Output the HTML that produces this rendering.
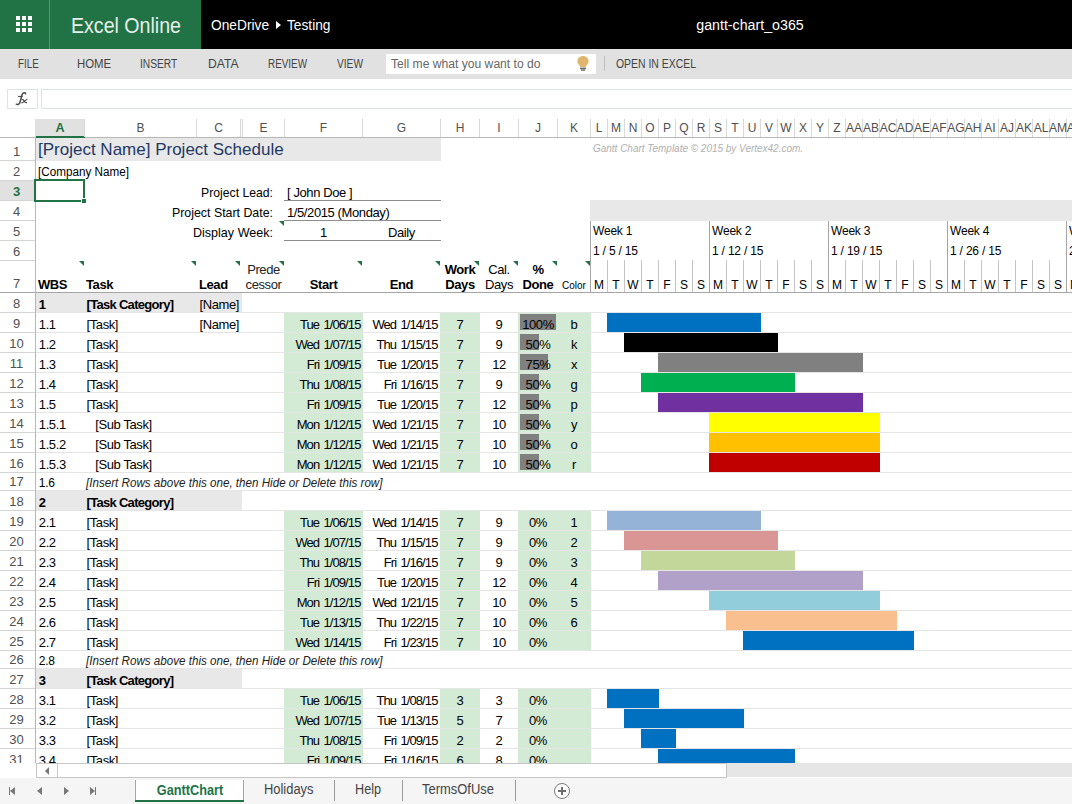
<!DOCTYPE html><html><head><meta charset="utf-8"><style>
html,body{margin:0;padding:0;}
body{width:1072px;height:804px;overflow:hidden;position:relative;background:#fff;font-family:"Liberation Sans", sans-serif;}
div{box-sizing:border-box;}
</style></head><body>
<div style="position:absolute;left:0px;top:0px;width:1072px;height:49px;background:#000;"></div>
<div style="position:absolute;left:0px;top:0px;width:201px;height:49px;background:#217346;"></div>
<div style="position:absolute;left:49px;top:0px;width:1px;height:49px;background:#5e8f72;"></div>
<div style="position:absolute;left:16px;top:16px;width:4px;height:4px;background:#fff;"></div>
<div style="position:absolute;left:16px;top:22px;width:4px;height:4px;background:#fff;"></div>
<div style="position:absolute;left:16px;top:28px;width:4px;height:4px;background:#fff;"></div>
<div style="position:absolute;left:22px;top:16px;width:4px;height:4px;background:#fff;"></div>
<div style="position:absolute;left:22px;top:22px;width:4px;height:4px;background:#fff;"></div>
<div style="position:absolute;left:22px;top:28px;width:4px;height:4px;background:#fff;"></div>
<div style="position:absolute;left:28px;top:16px;width:4px;height:4px;background:#fff;"></div>
<div style="position:absolute;left:28px;top:22px;width:4px;height:4px;background:#fff;"></div>
<div style="position:absolute;left:28px;top:28px;width:4px;height:4px;background:#fff;"></div>
<div style="position:absolute;top:15.38px;font-size:22px;line-height:22px;white-space:nowrap;color:#e6efe9;transform:scaleX(0.8907);transform-origin:left 0;left:70.5px;">Excel Online</div>
<div style="position:absolute;top:18.15px;font-size:14px;line-height:14px;white-space:nowrap;color:#fff;transform:scaleX(0.9814);transform-origin:left 0;left:210.8px;">OneDrive</div>
<div style="position:absolute;left:276px;top:21px;width:0;height:0;border-top:4px solid transparent;border-bottom:4px solid transparent;border-left:5px solid #fff;"></div>
<div style="position:absolute;top:18.15px;font-size:14px;line-height:14px;white-space:nowrap;color:#fff;transform:scaleX(0.9797);transform-origin:left 0;left:286.6px;">Testing</div>
<div style="position:absolute;top:18.15px;font-size:14px;line-height:14px;white-space:nowrap;color:#fff;transform:scaleX(1.0151);transform-origin:center 0;left:549.75px;width:400px;text-align:center;">gantt-chart_o365</div>
<div style="position:absolute;left:0px;top:49px;width:1072px;height:30px;background:#e1e1e1;"></div>
<div style="position:absolute;top:57.84px;font-size:12px;line-height:12px;white-space:nowrap;color:#444;transform:scaleX(0.8182);transform-origin:left 0;left:18.4px;">FILE</div>
<div style="position:absolute;top:57.84px;font-size:12px;line-height:12px;white-space:nowrap;color:#444;transform:scaleX(0.9472);transform-origin:left 0;left:76.7px;">HOME</div>
<div style="position:absolute;top:57.84px;font-size:12px;line-height:12px;white-space:nowrap;color:#444;transform:scaleX(0.8516);transform-origin:left 0;left:139.79999999999998px;">INSERT</div>
<div style="position:absolute;top:57.84px;font-size:12px;line-height:12px;white-space:nowrap;color:#444;transform:scaleX(1.0132);transform-origin:left 0;left:207.6px;">DATA</div>
<div style="position:absolute;top:57.84px;font-size:12px;line-height:12px;white-space:nowrap;color:#444;transform:scaleX(0.8245);transform-origin:left 0;left:267.7px;">REVIEW</div>
<div style="position:absolute;top:57.84px;font-size:12px;line-height:12px;white-space:nowrap;color:#444;transform:scaleX(0.8469);transform-origin:left 0;left:336.59999999999997px;">VIEW</div>
<div style="position:absolute;left:386px;top:54px;width:210px;height:20px;background:#fff;"></div>
<div style="position:absolute;top:58.42px;font-size:12.5px;line-height:12.5px;white-space:nowrap;color:#666;transform:scaleX(0.9695);transform-origin:left 0;left:391px;">Tell me what you want to do</div>
<div style="position:absolute;left:604px;top:56px;width:1px;height:15px;background:#c0c0c0;"></div>
<div style="position:absolute;top:57.84px;font-size:12px;line-height:12px;white-space:nowrap;color:#444;transform:scaleX(0.8696);transform-origin:left 0;left:616px;">OPEN IN EXCEL</div>
<svg style="position:absolute;left:570px;top:50px" width="26" height="26" viewBox="570 50 26 26">
<path d="M583 56 C586.3 56 588.6 58.4 588.6 61.3 C588.6 63.4 587.2 64.4 586.4 65.6 C586.1 66.1 586 66.6 586 67 L580 67 C580 66.6 579.9 66.1 579.6 65.6 C578.8 64.4 577.4 63.4 577.4 61.3 C577.4 58.4 579.7 56 583 56 Z" fill="#e0b56e"/>
<rect x="580" y="67.6" width="6" height="1.6" fill="#6a6a6a"/>
<rect x="581" y="69.4" width="4" height="1.4" fill="#6a6a6a"/>
</svg>
<div style="position:absolute;left:7px;top:89px;width:31px;height:20px;border:1px solid #dfe2e5;background:#fff;"></div>
<svg style="position:absolute;left:7px;top:89px" width="31" height="20" viewBox="0 0 31 20">
<path d="M18.6 4.6 C18.2 3.6 16.3 3.4 15.3 5.2 C14.6 6.6 13.5 12.5 12.6 14.2 C11.9 15.6 10.4 15.9 9.3 15.2" fill="none" stroke="#4a4a4a" stroke-width="1.5" stroke-linecap="round"/>
<path d="M11.2 7.5 L15.6 7.5" stroke="#4a4a4a" stroke-width="1.2"/>
<path d="M14.6 10.4 C15.8 10.2 16.5 10.8 17.2 12.2 C17.8 13.4 18.6 13.8 20 13.6 M20.4 10.3 C19.4 10.6 17.2 12.4 15.8 13.5 C15.3 13.8 14.8 13.8 14.3 13.6" fill="none" stroke="#4a4a4a" stroke-width="1.2"/>
</svg>
<div style="position:absolute;left:41px;top:89px;width:1040px;height:20px;border:1px solid #dfe2e5;background:#fff;"></div>
<div style="position:absolute;left:35px;top:119px;width:49px;height:18px;background:#e1e1e1;"></div>
<div style="position:absolute;left:0px;top:137px;width:1072px;height:1px;background:#b7b7b7;"></div>
<div style="position:absolute;left:36px;top:136px;width:49px;height:2px;background:#217346;"></div>
<div style="position:absolute;left:84px;top:119px;width:1px;height:18px;background:#d9d9d9;"></div>
<div style="position:absolute;top:121.62px;font-size:12.5px;line-height:12.5px;white-space:nowrap;color:#217346;font-weight:bold;left:-140.0px;width:400px;text-align:center;">A</div>
<div style="position:absolute;left:196px;top:119px;width:1px;height:18px;background:#d9d9d9;"></div>
<div style="position:absolute;top:122.04px;font-size:12px;line-height:12px;white-space:nowrap;color:#505050;left:-59.5px;width:400px;text-align:center;">B</div>
<div style="position:absolute;left:240px;top:119px;width:1px;height:18px;background:#d9d9d9;"></div>
<div style="position:absolute;top:122.04px;font-size:12px;line-height:12px;white-space:nowrap;color:#505050;left:18.5px;width:400px;text-align:center;">C</div>
<div style="position:absolute;left:242px;top:119px;width:1px;height:18px;background:#d9d9d9;"></div>
<div style="position:absolute;left:284px;top:119px;width:1px;height:18px;background:#d9d9d9;"></div>
<div style="position:absolute;top:122.04px;font-size:12px;line-height:12px;white-space:nowrap;color:#505050;left:63.5px;width:400px;text-align:center;">E</div>
<div style="position:absolute;left:362px;top:119px;width:1px;height:18px;background:#d9d9d9;"></div>
<div style="position:absolute;top:122.04px;font-size:12px;line-height:12px;white-space:nowrap;color:#505050;left:123.5px;width:400px;text-align:center;">F</div>
<div style="position:absolute;left:440px;top:119px;width:1px;height:18px;background:#d9d9d9;"></div>
<div style="position:absolute;top:122.04px;font-size:12px;line-height:12px;white-space:nowrap;color:#505050;left:201.5px;width:400px;text-align:center;">G</div>
<div style="position:absolute;left:479px;top:119px;width:1px;height:18px;background:#d9d9d9;"></div>
<div style="position:absolute;top:122.04px;font-size:12px;line-height:12px;white-space:nowrap;color:#505050;left:260.0px;width:400px;text-align:center;">H</div>
<div style="position:absolute;left:518px;top:119px;width:1px;height:18px;background:#d9d9d9;"></div>
<div style="position:absolute;top:122.04px;font-size:12px;line-height:12px;white-space:nowrap;color:#505050;left:299.0px;width:400px;text-align:center;">I</div>
<div style="position:absolute;left:557px;top:119px;width:1px;height:18px;background:#d9d9d9;"></div>
<div style="position:absolute;top:122.04px;font-size:12px;line-height:12px;white-space:nowrap;color:#505050;left:338.0px;width:400px;text-align:center;">J</div>
<div style="position:absolute;left:590px;top:119px;width:1px;height:18px;background:#d9d9d9;"></div>
<div style="position:absolute;top:122.04px;font-size:12px;line-height:12px;white-space:nowrap;color:#505050;left:374.0px;width:400px;text-align:center;">K</div>
<div style="position:absolute;left:607px;top:119px;width:1px;height:18px;background:#d9d9d9;"></div>
<div style="position:absolute;top:122.04px;font-size:12px;line-height:12px;white-space:nowrap;color:#505050;left:399.0px;width:400px;text-align:center;">L</div>
<div style="position:absolute;left:624px;top:119px;width:1px;height:18px;background:#d9d9d9;"></div>
<div style="position:absolute;top:122.04px;font-size:12px;line-height:12px;white-space:nowrap;color:#505050;left:416.0px;width:400px;text-align:center;">M</div>
<div style="position:absolute;left:641px;top:119px;width:1px;height:18px;background:#d9d9d9;"></div>
<div style="position:absolute;top:122.04px;font-size:12px;line-height:12px;white-space:nowrap;color:#505050;left:433.0px;width:400px;text-align:center;">N</div>
<div style="position:absolute;left:658px;top:119px;width:1px;height:18px;background:#d9d9d9;"></div>
<div style="position:absolute;top:122.04px;font-size:12px;line-height:12px;white-space:nowrap;color:#505050;left:450.0px;width:400px;text-align:center;">O</div>
<div style="position:absolute;left:675px;top:119px;width:1px;height:18px;background:#d9d9d9;"></div>
<div style="position:absolute;top:122.04px;font-size:12px;line-height:12px;white-space:nowrap;color:#505050;left:467.0px;width:400px;text-align:center;">P</div>
<div style="position:absolute;left:692px;top:119px;width:1px;height:18px;background:#d9d9d9;"></div>
<div style="position:absolute;top:122.04px;font-size:12px;line-height:12px;white-space:nowrap;color:#505050;left:484.0px;width:400px;text-align:center;">Q</div>
<div style="position:absolute;left:709px;top:119px;width:1px;height:18px;background:#d9d9d9;"></div>
<div style="position:absolute;top:122.04px;font-size:12px;line-height:12px;white-space:nowrap;color:#505050;left:501.0px;width:400px;text-align:center;">R</div>
<div style="position:absolute;left:726px;top:119px;width:1px;height:18px;background:#d9d9d9;"></div>
<div style="position:absolute;top:122.04px;font-size:12px;line-height:12px;white-space:nowrap;color:#505050;left:518.0px;width:400px;text-align:center;">S</div>
<div style="position:absolute;left:743px;top:119px;width:1px;height:18px;background:#d9d9d9;"></div>
<div style="position:absolute;top:122.04px;font-size:12px;line-height:12px;white-space:nowrap;color:#505050;left:535.0px;width:400px;text-align:center;">T</div>
<div style="position:absolute;left:760px;top:119px;width:1px;height:18px;background:#d9d9d9;"></div>
<div style="position:absolute;top:122.04px;font-size:12px;line-height:12px;white-space:nowrap;color:#505050;left:552.0px;width:400px;text-align:center;">U</div>
<div style="position:absolute;left:777px;top:119px;width:1px;height:18px;background:#d9d9d9;"></div>
<div style="position:absolute;top:122.04px;font-size:12px;line-height:12px;white-space:nowrap;color:#505050;left:569.0px;width:400px;text-align:center;">V</div>
<div style="position:absolute;left:794px;top:119px;width:1px;height:18px;background:#d9d9d9;"></div>
<div style="position:absolute;top:122.04px;font-size:12px;line-height:12px;white-space:nowrap;color:#505050;left:586.0px;width:400px;text-align:center;">W</div>
<div style="position:absolute;left:811px;top:119px;width:1px;height:18px;background:#d9d9d9;"></div>
<div style="position:absolute;top:122.04px;font-size:12px;line-height:12px;white-space:nowrap;color:#505050;left:603.0px;width:400px;text-align:center;">X</div>
<div style="position:absolute;left:828px;top:119px;width:1px;height:18px;background:#d9d9d9;"></div>
<div style="position:absolute;top:122.04px;font-size:12px;line-height:12px;white-space:nowrap;color:#505050;left:620.0px;width:400px;text-align:center;">Y</div>
<div style="position:absolute;left:845px;top:119px;width:1px;height:18px;background:#d9d9d9;"></div>
<div style="position:absolute;top:122.04px;font-size:12px;line-height:12px;white-space:nowrap;color:#505050;left:637.0px;width:400px;text-align:center;">Z</div>
<div style="position:absolute;left:862px;top:119px;width:1px;height:18px;background:#d9d9d9;"></div>
<div style="position:absolute;top:122.04px;font-size:12px;line-height:12px;white-space:nowrap;color:#505050;left:654.0px;width:400px;text-align:center;">AA</div>
<div style="position:absolute;left:879px;top:119px;width:1px;height:18px;background:#d9d9d9;"></div>
<div style="position:absolute;top:122.04px;font-size:12px;line-height:12px;white-space:nowrap;color:#505050;left:671.0px;width:400px;text-align:center;">AB</div>
<div style="position:absolute;left:896px;top:119px;width:1px;height:18px;background:#d9d9d9;"></div>
<div style="position:absolute;top:122.04px;font-size:12px;line-height:12px;white-space:nowrap;color:#505050;left:688.0px;width:400px;text-align:center;">AC</div>
<div style="position:absolute;left:913px;top:119px;width:1px;height:18px;background:#d9d9d9;"></div>
<div style="position:absolute;top:122.04px;font-size:12px;line-height:12px;white-space:nowrap;color:#505050;left:705.0px;width:400px;text-align:center;">AD</div>
<div style="position:absolute;left:930px;top:119px;width:1px;height:18px;background:#d9d9d9;"></div>
<div style="position:absolute;top:122.04px;font-size:12px;line-height:12px;white-space:nowrap;color:#505050;left:722.0px;width:400px;text-align:center;">AE</div>
<div style="position:absolute;left:947px;top:119px;width:1px;height:18px;background:#d9d9d9;"></div>
<div style="position:absolute;top:122.04px;font-size:12px;line-height:12px;white-space:nowrap;color:#505050;left:739.0px;width:400px;text-align:center;">AF</div>
<div style="position:absolute;left:964px;top:119px;width:1px;height:18px;background:#d9d9d9;"></div>
<div style="position:absolute;top:122.04px;font-size:12px;line-height:12px;white-space:nowrap;color:#505050;left:756.0px;width:400px;text-align:center;">AG</div>
<div style="position:absolute;left:981px;top:119px;width:1px;height:18px;background:#d9d9d9;"></div>
<div style="position:absolute;top:122.04px;font-size:12px;line-height:12px;white-space:nowrap;color:#505050;left:773.0px;width:400px;text-align:center;">AH</div>
<div style="position:absolute;left:998px;top:119px;width:1px;height:18px;background:#d9d9d9;"></div>
<div style="position:absolute;top:122.04px;font-size:12px;line-height:12px;white-space:nowrap;color:#505050;left:790.0px;width:400px;text-align:center;">AI</div>
<div style="position:absolute;left:1015px;top:119px;width:1px;height:18px;background:#d9d9d9;"></div>
<div style="position:absolute;top:122.04px;font-size:12px;line-height:12px;white-space:nowrap;color:#505050;left:807.0px;width:400px;text-align:center;">AJ</div>
<div style="position:absolute;left:1032px;top:119px;width:1px;height:18px;background:#d9d9d9;"></div>
<div style="position:absolute;top:122.04px;font-size:12px;line-height:12px;white-space:nowrap;color:#505050;left:824.0px;width:400px;text-align:center;">AK</div>
<div style="position:absolute;left:1049px;top:119px;width:1px;height:18px;background:#d9d9d9;"></div>
<div style="position:absolute;top:122.04px;font-size:12px;line-height:12px;white-space:nowrap;color:#505050;left:841.0px;width:400px;text-align:center;">AL</div>
<div style="position:absolute;left:1066px;top:119px;width:1px;height:18px;background:#d9d9d9;"></div>
<div style="position:absolute;top:122.04px;font-size:12px;line-height:12px;white-space:nowrap;color:#505050;left:858.0px;width:400px;text-align:center;">AM</div>
<div style="position:absolute;left:1083px;top:119px;width:1px;height:18px;background:#d9d9d9;"></div>
<div style="position:absolute;top:122.04px;font-size:12px;line-height:12px;white-space:nowrap;color:#505050;left:875.0px;width:400px;text-align:center;">AN</div>
<div style="position:absolute;left:0;top:138px;width:1072px;height:625px;overflow:hidden;">
<div style="position:absolute;left:0;top:-138px;width:1072px;height:1000px;">
<div style="position:absolute;left:36px;top:138px;width:405px;height:23px;background:#e8e8e8;"></div>
<div style="position:absolute;left:590px;top:200px;width:482px;height:21px;background:#e8e8e8;"></div>
<div style="position:absolute;left:0px;top:181px;width:35px;height:19px;background:#e1e1e1;"></div>
<div style="position:absolute;left:284px;top:313px;width:79px;height:19px;background:#d3ebd5;"></div>
<div style="position:absolute;left:440px;top:313px;width:40px;height:19px;background:#d3ebd5;"></div>
<div style="position:absolute;left:518px;top:313px;width:73px;height:19px;background:#d3ebd5;"></div>
<div style="position:absolute;left:284px;top:333px;width:79px;height:19px;background:#d3ebd5;"></div>
<div style="position:absolute;left:440px;top:333px;width:40px;height:19px;background:#d3ebd5;"></div>
<div style="position:absolute;left:518px;top:333px;width:73px;height:19px;background:#d3ebd5;"></div>
<div style="position:absolute;left:284px;top:353px;width:79px;height:19px;background:#d3ebd5;"></div>
<div style="position:absolute;left:440px;top:353px;width:40px;height:19px;background:#d3ebd5;"></div>
<div style="position:absolute;left:518px;top:353px;width:73px;height:19px;background:#d3ebd5;"></div>
<div style="position:absolute;left:284px;top:373px;width:79px;height:19px;background:#d3ebd5;"></div>
<div style="position:absolute;left:440px;top:373px;width:40px;height:19px;background:#d3ebd5;"></div>
<div style="position:absolute;left:518px;top:373px;width:73px;height:19px;background:#d3ebd5;"></div>
<div style="position:absolute;left:284px;top:393px;width:79px;height:19px;background:#d3ebd5;"></div>
<div style="position:absolute;left:440px;top:393px;width:40px;height:19px;background:#d3ebd5;"></div>
<div style="position:absolute;left:518px;top:393px;width:73px;height:19px;background:#d3ebd5;"></div>
<div style="position:absolute;left:284px;top:413px;width:79px;height:19px;background:#d3ebd5;"></div>
<div style="position:absolute;left:440px;top:413px;width:40px;height:19px;background:#d3ebd5;"></div>
<div style="position:absolute;left:518px;top:413px;width:73px;height:19px;background:#d3ebd5;"></div>
<div style="position:absolute;left:284px;top:433px;width:79px;height:19px;background:#d3ebd5;"></div>
<div style="position:absolute;left:440px;top:433px;width:40px;height:19px;background:#d3ebd5;"></div>
<div style="position:absolute;left:518px;top:433px;width:73px;height:19px;background:#d3ebd5;"></div>
<div style="position:absolute;left:284px;top:453px;width:79px;height:19px;background:#d3ebd5;"></div>
<div style="position:absolute;left:440px;top:453px;width:40px;height:19px;background:#d3ebd5;"></div>
<div style="position:absolute;left:518px;top:453px;width:73px;height:19px;background:#d3ebd5;"></div>
<div style="position:absolute;left:284px;top:511px;width:79px;height:19px;background:#d3ebd5;"></div>
<div style="position:absolute;left:440px;top:511px;width:40px;height:19px;background:#d3ebd5;"></div>
<div style="position:absolute;left:518px;top:511px;width:73px;height:19px;background:#d3ebd5;"></div>
<div style="position:absolute;left:284px;top:531px;width:79px;height:19px;background:#d3ebd5;"></div>
<div style="position:absolute;left:440px;top:531px;width:40px;height:19px;background:#d3ebd5;"></div>
<div style="position:absolute;left:518px;top:531px;width:73px;height:19px;background:#d3ebd5;"></div>
<div style="position:absolute;left:284px;top:551px;width:79px;height:19px;background:#d3ebd5;"></div>
<div style="position:absolute;left:440px;top:551px;width:40px;height:19px;background:#d3ebd5;"></div>
<div style="position:absolute;left:518px;top:551px;width:73px;height:19px;background:#d3ebd5;"></div>
<div style="position:absolute;left:284px;top:571px;width:79px;height:19px;background:#d3ebd5;"></div>
<div style="position:absolute;left:440px;top:571px;width:40px;height:19px;background:#d3ebd5;"></div>
<div style="position:absolute;left:518px;top:571px;width:73px;height:19px;background:#d3ebd5;"></div>
<div style="position:absolute;left:284px;top:591px;width:79px;height:19px;background:#d3ebd5;"></div>
<div style="position:absolute;left:440px;top:591px;width:40px;height:19px;background:#d3ebd5;"></div>
<div style="position:absolute;left:518px;top:591px;width:73px;height:19px;background:#d3ebd5;"></div>
<div style="position:absolute;left:284px;top:611px;width:79px;height:19px;background:#d3ebd5;"></div>
<div style="position:absolute;left:440px;top:611px;width:40px;height:19px;background:#d3ebd5;"></div>
<div style="position:absolute;left:518px;top:611px;width:73px;height:19px;background:#d3ebd5;"></div>
<div style="position:absolute;left:284px;top:631px;width:79px;height:19px;background:#d3ebd5;"></div>
<div style="position:absolute;left:440px;top:631px;width:40px;height:19px;background:#d3ebd5;"></div>
<div style="position:absolute;left:518px;top:631px;width:73px;height:19px;background:#d3ebd5;"></div>
<div style="position:absolute;left:284px;top:689px;width:79px;height:19px;background:#d3ebd5;"></div>
<div style="position:absolute;left:440px;top:689px;width:40px;height:19px;background:#d3ebd5;"></div>
<div style="position:absolute;left:518px;top:689px;width:73px;height:19px;background:#d3ebd5;"></div>
<div style="position:absolute;left:284px;top:709px;width:79px;height:19px;background:#d3ebd5;"></div>
<div style="position:absolute;left:440px;top:709px;width:40px;height:19px;background:#d3ebd5;"></div>
<div style="position:absolute;left:518px;top:709px;width:73px;height:19px;background:#d3ebd5;"></div>
<div style="position:absolute;left:284px;top:729px;width:79px;height:19px;background:#d3ebd5;"></div>
<div style="position:absolute;left:440px;top:729px;width:40px;height:19px;background:#d3ebd5;"></div>
<div style="position:absolute;left:518px;top:729px;width:73px;height:19px;background:#d3ebd5;"></div>
<div style="position:absolute;left:284px;top:749px;width:79px;height:19px;background:#d3ebd5;"></div>
<div style="position:absolute;left:440px;top:749px;width:40px;height:19px;background:#d3ebd5;"></div>
<div style="position:absolute;left:518px;top:749px;width:73px;height:19px;background:#d3ebd5;"></div>
<div style="position:absolute;left:36px;top:293px;width:206px;height:19px;background:#e8e8e8;"></div>
<div style="position:absolute;left:36px;top:491px;width:206px;height:19px;background:#e8e8e8;"></div>
<div style="position:absolute;left:36px;top:669px;width:206px;height:19px;background:#e8e8e8;"></div>
<div style="position:absolute;left:36px;top:312px;width:1036px;height:1px;background:#e5e5e5;"></div>
<div style="position:absolute;left:36px;top:332px;width:1036px;height:1px;background:#e5e5e5;"></div>
<div style="position:absolute;left:36px;top:352px;width:1036px;height:1px;background:#e5e5e5;"></div>
<div style="position:absolute;left:36px;top:372px;width:1036px;height:1px;background:#e5e5e5;"></div>
<div style="position:absolute;left:36px;top:392px;width:1036px;height:1px;background:#e5e5e5;"></div>
<div style="position:absolute;left:36px;top:412px;width:1036px;height:1px;background:#e5e5e5;"></div>
<div style="position:absolute;left:36px;top:432px;width:1036px;height:1px;background:#e5e5e5;"></div>
<div style="position:absolute;left:36px;top:452px;width:1036px;height:1px;background:#e5e5e5;"></div>
<div style="position:absolute;left:36px;top:472px;width:1036px;height:1px;background:#e5e5e5;"></div>
<div style="position:absolute;left:36px;top:490px;width:1036px;height:1px;background:#e5e5e5;"></div>
<div style="position:absolute;left:36px;top:510px;width:1036px;height:1px;background:#e5e5e5;"></div>
<div style="position:absolute;left:36px;top:530px;width:1036px;height:1px;background:#e5e5e5;"></div>
<div style="position:absolute;left:36px;top:550px;width:1036px;height:1px;background:#e5e5e5;"></div>
<div style="position:absolute;left:36px;top:570px;width:1036px;height:1px;background:#e5e5e5;"></div>
<div style="position:absolute;left:36px;top:590px;width:1036px;height:1px;background:#e5e5e5;"></div>
<div style="position:absolute;left:36px;top:610px;width:1036px;height:1px;background:#e5e5e5;"></div>
<div style="position:absolute;left:36px;top:630px;width:1036px;height:1px;background:#e5e5e5;"></div>
<div style="position:absolute;left:36px;top:650px;width:1036px;height:1px;background:#e5e5e5;"></div>
<div style="position:absolute;left:36px;top:668px;width:1036px;height:1px;background:#e5e5e5;"></div>
<div style="position:absolute;left:36px;top:688px;width:1036px;height:1px;background:#e5e5e5;"></div>
<div style="position:absolute;left:36px;top:708px;width:1036px;height:1px;background:#e5e5e5;"></div>
<div style="position:absolute;left:36px;top:728px;width:1036px;height:1px;background:#e5e5e5;"></div>
<div style="position:absolute;left:36px;top:748px;width:1036px;height:1px;background:#e5e5e5;"></div>
<div style="position:absolute;left:36px;top:768px;width:1036px;height:1px;background:#e5e5e5;"></div>
<div style="position:absolute;left:0px;top:160px;width:35px;height:1px;background:#d4d4d4;"></div>
<div style="position:absolute;left:0px;top:180px;width:35px;height:1px;background:#d4d4d4;"></div>
<div style="position:absolute;left:0px;top:200px;width:35px;height:1px;background:#d4d4d4;"></div>
<div style="position:absolute;left:0px;top:220px;width:35px;height:1px;background:#d4d4d4;"></div>
<div style="position:absolute;left:0px;top:240px;width:35px;height:1px;background:#d4d4d4;"></div>
<div style="position:absolute;left:0px;top:260px;width:35px;height:1px;background:#d4d4d4;"></div>
<div style="position:absolute;left:0px;top:292px;width:35px;height:1px;background:#d4d4d4;"></div>
<div style="position:absolute;left:0px;top:312px;width:35px;height:1px;background:#d4d4d4;"></div>
<div style="position:absolute;left:0px;top:332px;width:35px;height:1px;background:#d4d4d4;"></div>
<div style="position:absolute;left:0px;top:352px;width:35px;height:1px;background:#d4d4d4;"></div>
<div style="position:absolute;left:0px;top:372px;width:35px;height:1px;background:#d4d4d4;"></div>
<div style="position:absolute;left:0px;top:392px;width:35px;height:1px;background:#d4d4d4;"></div>
<div style="position:absolute;left:0px;top:412px;width:35px;height:1px;background:#d4d4d4;"></div>
<div style="position:absolute;left:0px;top:432px;width:35px;height:1px;background:#d4d4d4;"></div>
<div style="position:absolute;left:0px;top:452px;width:35px;height:1px;background:#d4d4d4;"></div>
<div style="position:absolute;left:0px;top:472px;width:35px;height:1px;background:#d4d4d4;"></div>
<div style="position:absolute;left:0px;top:490px;width:35px;height:1px;background:#d4d4d4;"></div>
<div style="position:absolute;left:0px;top:510px;width:35px;height:1px;background:#d4d4d4;"></div>
<div style="position:absolute;left:0px;top:530px;width:35px;height:1px;background:#d4d4d4;"></div>
<div style="position:absolute;left:0px;top:550px;width:35px;height:1px;background:#d4d4d4;"></div>
<div style="position:absolute;left:0px;top:570px;width:35px;height:1px;background:#d4d4d4;"></div>
<div style="position:absolute;left:0px;top:590px;width:35px;height:1px;background:#d4d4d4;"></div>
<div style="position:absolute;left:0px;top:610px;width:35px;height:1px;background:#d4d4d4;"></div>
<div style="position:absolute;left:0px;top:630px;width:35px;height:1px;background:#d4d4d4;"></div>
<div style="position:absolute;left:0px;top:650px;width:35px;height:1px;background:#d4d4d4;"></div>
<div style="position:absolute;left:0px;top:668px;width:35px;height:1px;background:#d4d4d4;"></div>
<div style="position:absolute;left:0px;top:688px;width:35px;height:1px;background:#d4d4d4;"></div>
<div style="position:absolute;left:0px;top:708px;width:35px;height:1px;background:#d4d4d4;"></div>
<div style="position:absolute;left:0px;top:728px;width:35px;height:1px;background:#d4d4d4;"></div>
<div style="position:absolute;left:0px;top:748px;width:35px;height:1px;background:#d4d4d4;"></div>
<div style="position:absolute;left:0px;top:768px;width:35px;height:1px;background:#d4d4d4;"></div>
<div style="position:absolute;left:0px;top:292px;width:1072px;height:1px;background:#a6a6a6;"></div>
<div style="position:absolute;left:35px;top:138px;width:1px;height:700px;background:#b7b7b7;"></div>
<div style="position:absolute;top:145.00px;font-size:13px;line-height:13px;white-space:nowrap;color:#505050;left:-183.5px;width:400px;text-align:center;">1</div>
<div style="position:absolute;top:165.00px;font-size:13px;line-height:13px;white-space:nowrap;color:#505050;left:-183.5px;width:400px;text-align:center;">2</div>
<div style="position:absolute;top:185.00px;font-size:13px;line-height:13px;white-space:nowrap;color:#217346;font-weight:bold;left:-183.5px;width:400px;text-align:center;">3</div>
<div style="position:absolute;top:205.00px;font-size:13px;line-height:13px;white-space:nowrap;color:#505050;left:-183.5px;width:400px;text-align:center;">4</div>
<div style="position:absolute;top:225.00px;font-size:13px;line-height:13px;white-space:nowrap;color:#505050;left:-183.5px;width:400px;text-align:center;">5</div>
<div style="position:absolute;top:245.00px;font-size:13px;line-height:13px;white-space:nowrap;color:#505050;left:-183.5px;width:400px;text-align:center;">6</div>
<div style="position:absolute;top:277.00px;font-size:13px;line-height:13px;white-space:nowrap;color:#505050;left:-183.5px;width:400px;text-align:center;">7</div>
<div style="position:absolute;top:297.00px;font-size:13px;line-height:13px;white-space:nowrap;color:#505050;left:-183.5px;width:400px;text-align:center;">8</div>
<div style="position:absolute;top:317.00px;font-size:13px;line-height:13px;white-space:nowrap;color:#505050;left:-183.5px;width:400px;text-align:center;">9</div>
<div style="position:absolute;top:337.00px;font-size:13px;line-height:13px;white-space:nowrap;color:#505050;left:-183.5px;width:400px;text-align:center;">10</div>
<div style="position:absolute;top:357.00px;font-size:13px;line-height:13px;white-space:nowrap;color:#505050;left:-183.5px;width:400px;text-align:center;">11</div>
<div style="position:absolute;top:377.00px;font-size:13px;line-height:13px;white-space:nowrap;color:#505050;left:-183.5px;width:400px;text-align:center;">12</div>
<div style="position:absolute;top:397.00px;font-size:13px;line-height:13px;white-space:nowrap;color:#505050;left:-183.5px;width:400px;text-align:center;">13</div>
<div style="position:absolute;top:417.00px;font-size:13px;line-height:13px;white-space:nowrap;color:#505050;left:-183.5px;width:400px;text-align:center;">14</div>
<div style="position:absolute;top:437.00px;font-size:13px;line-height:13px;white-space:nowrap;color:#505050;left:-183.5px;width:400px;text-align:center;">15</div>
<div style="position:absolute;top:457.00px;font-size:13px;line-height:13px;white-space:nowrap;color:#505050;left:-183.5px;width:400px;text-align:center;">16</div>
<div style="position:absolute;top:475.00px;font-size:13px;line-height:13px;white-space:nowrap;color:#505050;left:-183.5px;width:400px;text-align:center;">17</div>
<div style="position:absolute;top:495.00px;font-size:13px;line-height:13px;white-space:nowrap;color:#505050;left:-183.5px;width:400px;text-align:center;">18</div>
<div style="position:absolute;top:515.00px;font-size:13px;line-height:13px;white-space:nowrap;color:#505050;left:-183.5px;width:400px;text-align:center;">19</div>
<div style="position:absolute;top:535.00px;font-size:13px;line-height:13px;white-space:nowrap;color:#505050;left:-183.5px;width:400px;text-align:center;">20</div>
<div style="position:absolute;top:555.00px;font-size:13px;line-height:13px;white-space:nowrap;color:#505050;left:-183.5px;width:400px;text-align:center;">21</div>
<div style="position:absolute;top:575.00px;font-size:13px;line-height:13px;white-space:nowrap;color:#505050;left:-183.5px;width:400px;text-align:center;">22</div>
<div style="position:absolute;top:595.00px;font-size:13px;line-height:13px;white-space:nowrap;color:#505050;left:-183.5px;width:400px;text-align:center;">23</div>
<div style="position:absolute;top:615.00px;font-size:13px;line-height:13px;white-space:nowrap;color:#505050;left:-183.5px;width:400px;text-align:center;">24</div>
<div style="position:absolute;top:635.00px;font-size:13px;line-height:13px;white-space:nowrap;color:#505050;left:-183.5px;width:400px;text-align:center;">25</div>
<div style="position:absolute;top:653.00px;font-size:13px;line-height:13px;white-space:nowrap;color:#505050;left:-183.5px;width:400px;text-align:center;">26</div>
<div style="position:absolute;top:673.00px;font-size:13px;line-height:13px;white-space:nowrap;color:#505050;left:-183.5px;width:400px;text-align:center;">27</div>
<div style="position:absolute;top:693.00px;font-size:13px;line-height:13px;white-space:nowrap;color:#505050;left:-183.5px;width:400px;text-align:center;">28</div>
<div style="position:absolute;top:713.00px;font-size:13px;line-height:13px;white-space:nowrap;color:#505050;left:-183.5px;width:400px;text-align:center;">29</div>
<div style="position:absolute;top:733.00px;font-size:13px;line-height:13px;white-space:nowrap;color:#505050;left:-183.5px;width:400px;text-align:center;">30</div>
<div style="position:absolute;top:753.00px;font-size:13px;line-height:13px;white-space:nowrap;color:#505050;left:-183.5px;width:400px;text-align:center;">31</div>
<div style="position:absolute;top:140.61px;font-size:17px;line-height:17px;white-space:nowrap;color:#1f3864;left:38px;">[Project Name] Project Schedule</div>
<div style="position:absolute;top:143.53px;font-size:10px;line-height:10px;white-space:nowrap;color:#b0b0b0;font-style:italic;transform:scaleX(0.9972);transform-origin:left 0;left:593px;">Gantt Chart Template &copy; 2015 by Vertex42.com.</div>
<div style="position:absolute;top:165.84px;font-size:12px;line-height:12px;white-space:nowrap;color:#000;transform:scaleX(0.9743);transform-origin:left 0;left:38px;">[Company Name]</div>
<div style="position:absolute;top:186.00px;font-size:13px;line-height:13px;white-space:nowrap;color:#000;transform:scaleX(0.9399);transform-origin:right 0;left:-127.5px;width:400px;text-align:right;">Project Lead:</div>
<div style="position:absolute;top:206.00px;font-size:13px;line-height:13px;white-space:nowrap;color:#000;transform:scaleX(0.9510);transform-origin:right 0;left:-127.5px;width:400px;text-align:right;">Project Start Date:</div>
<div style="position:absolute;top:226.00px;font-size:13px;line-height:13px;white-space:nowrap;color:#000;transform:scaleX(0.9662);transform-origin:right 0;left:-127.5px;width:400px;text-align:right;">Display Week:</div>
<div style="position:absolute;top:186.00px;font-size:13px;line-height:13px;white-space:nowrap;color:#000;letter-spacing:-0.4px;left:287px;">[ John Doe ]</div>
<div style="position:absolute;top:206.00px;font-size:13px;line-height:13px;white-space:nowrap;color:#000;letter-spacing:-0.4px;left:287px;">1/5/2015 (Monday)</div>
<div style="position:absolute;top:226.00px;font-size:13px;line-height:13px;white-space:nowrap;color:#000;left:123.5px;width:400px;text-align:center;">1</div>
<div style="position:absolute;top:226.00px;font-size:13px;line-height:13px;white-space:nowrap;color:#000;letter-spacing:-0.4px;left:201.5px;width:400px;text-align:center;">Daily</div>
<div style="position:absolute;left:284px;top:200px;width:157px;height:1px;background:#8c8c8c;"></div>
<div style="position:absolute;left:284px;top:220px;width:157px;height:1px;background:#8c8c8c;"></div>
<div style="position:absolute;left:284px;top:240px;width:157px;height:1px;background:#8c8c8c;"></div>
<div style="position:absolute;left:279px;top:221px;width:0;height:0;border-top:5px solid #217346;border-left:5px solid transparent;"></div>
<div style="position:absolute;left:79px;top:261px;width:0;height:0;border-top:5px solid #217346;border-left:5px solid transparent;"></div>
<div style="position:absolute;left:191px;top:261px;width:0;height:0;border-top:5px solid #217346;border-left:5px solid transparent;"></div>
<div style="position:absolute;left:235px;top:261px;width:0;height:0;border-top:5px solid #217346;border-left:5px solid transparent;"></div>
<div style="position:absolute;left:279px;top:261px;width:0;height:0;border-top:5px solid #217346;border-left:5px solid transparent;"></div>
<div style="position:absolute;left:357px;top:261px;width:0;height:0;border-top:5px solid #217346;border-left:5px solid transparent;"></div>
<div style="position:absolute;left:435px;top:261px;width:0;height:0;border-top:5px solid #217346;border-left:5px solid transparent;"></div>
<div style="position:absolute;left:474px;top:261px;width:0;height:0;border-top:5px solid #217346;border-left:5px solid transparent;"></div>
<div style="position:absolute;left:513px;top:261px;width:0;height:0;border-top:5px solid #217346;border-left:5px solid transparent;"></div>
<div style="position:absolute;left:552px;top:261px;width:0;height:0;border-top:5px solid #217346;border-left:5px solid transparent;"></div>
<div style="position:absolute;left:585px;top:261px;width:0;height:0;border-top:5px solid #217346;border-left:5px solid transparent;"></div>
<div style="position:absolute;top:278.00px;font-size:13px;line-height:13px;white-space:nowrap;color:#000;font-weight:bold;letter-spacing:-0.4px;left:38px;">WBS</div>
<div style="position:absolute;top:278.00px;font-size:13px;line-height:13px;white-space:nowrap;color:#000;font-weight:bold;letter-spacing:-0.4px;left:86px;">Task</div>
<div style="position:absolute;top:278.00px;font-size:13px;line-height:13px;white-space:nowrap;color:#000;font-weight:bold;letter-spacing:-0.4px;left:199px;">Lead</div>
<div style="position:absolute;top:263.00px;font-size:13px;line-height:13px;white-space:nowrap;color:#222;letter-spacing:-0.4px;left:63.5px;width:400px;text-align:center;">Prede</div>
<div style="position:absolute;top:278.00px;font-size:13px;line-height:13px;white-space:nowrap;color:#222;letter-spacing:-0.4px;left:63.5px;width:400px;text-align:center;">cessor</div>
<div style="position:absolute;top:278.00px;font-size:13px;line-height:13px;white-space:nowrap;color:#000;font-weight:bold;letter-spacing:-0.4px;left:123.5px;width:400px;text-align:center;">Start</div>
<div style="position:absolute;top:278.00px;font-size:13px;line-height:13px;white-space:nowrap;color:#000;font-weight:bold;letter-spacing:-0.4px;left:201.5px;width:400px;text-align:center;">End</div>
<div style="position:absolute;top:263.00px;font-size:13px;line-height:13px;white-space:nowrap;color:#000;font-weight:bold;letter-spacing:-0.4px;left:260px;width:400px;text-align:center;">Work</div>
<div style="position:absolute;top:278.00px;font-size:13px;line-height:13px;white-space:nowrap;color:#000;font-weight:bold;letter-spacing:-0.4px;left:260px;width:400px;text-align:center;">Days</div>
<div style="position:absolute;top:263.00px;font-size:13px;line-height:13px;white-space:nowrap;color:#000;letter-spacing:-0.4px;left:299px;width:400px;text-align:center;">Cal.</div>
<div style="position:absolute;top:278.00px;font-size:13px;line-height:13px;white-space:nowrap;color:#000;letter-spacing:-0.4px;left:299px;width:400px;text-align:center;">Days</div>
<div style="position:absolute;top:263.00px;font-size:13px;line-height:13px;white-space:nowrap;color:#000;font-weight:bold;letter-spacing:-0.4px;left:338px;width:400px;text-align:center;">%</div>
<div style="position:absolute;top:278.00px;font-size:13px;line-height:13px;white-space:nowrap;color:#000;font-weight:bold;letter-spacing:-0.4px;left:338px;width:400px;text-align:center;">Done</div>
<div style="position:absolute;top:280.54px;font-size:10px;line-height:10px;white-space:nowrap;color:#000;left:374px;width:400px;text-align:center;">Color</div>
<div style="position:absolute;left:590px;top:221px;width:1px;height:71px;background:#a6a6a6;"></div>
<div style="position:absolute;top:224.84px;font-size:12px;line-height:12px;white-space:nowrap;color:#000;letter-spacing:-0.2px;left:593px;">Week 1</div>
<div style="position:absolute;top:244.84px;font-size:12px;line-height:12px;white-space:nowrap;color:#000;letter-spacing:-0.2px;left:593px;">1 / 5 / 15</div>
<div style="position:absolute;left:709px;top:221px;width:1px;height:71px;background:#a6a6a6;"></div>
<div style="position:absolute;top:224.84px;font-size:12px;line-height:12px;white-space:nowrap;color:#000;letter-spacing:-0.2px;left:712px;">Week 2</div>
<div style="position:absolute;top:244.84px;font-size:12px;line-height:12px;white-space:nowrap;color:#000;letter-spacing:-0.2px;left:712px;">1 / 12 / 15</div>
<div style="position:absolute;left:828px;top:221px;width:1px;height:71px;background:#a6a6a6;"></div>
<div style="position:absolute;top:224.84px;font-size:12px;line-height:12px;white-space:nowrap;color:#000;letter-spacing:-0.2px;left:831px;">Week 3</div>
<div style="position:absolute;top:244.84px;font-size:12px;line-height:12px;white-space:nowrap;color:#000;letter-spacing:-0.2px;left:831px;">1 / 19 / 15</div>
<div style="position:absolute;left:947px;top:221px;width:1px;height:71px;background:#a6a6a6;"></div>
<div style="position:absolute;top:224.84px;font-size:12px;line-height:12px;white-space:nowrap;color:#000;letter-spacing:-0.2px;left:950px;">Week 4</div>
<div style="position:absolute;top:244.84px;font-size:12px;line-height:12px;white-space:nowrap;color:#000;letter-spacing:-0.2px;left:950px;">1 / 26 / 15</div>
<div style="position:absolute;left:1066px;top:221px;width:1px;height:71px;background:#a6a6a6;"></div>
<div style="position:absolute;top:224.84px;font-size:12px;line-height:12px;white-space:nowrap;color:#000;letter-spacing:-0.2px;left:1069px;">Week 5</div>
<div style="position:absolute;top:244.84px;font-size:12px;line-height:12px;white-space:nowrap;color:#000;letter-spacing:-0.2px;left:1069px;">2 / 2 / 15</div>
<div style="position:absolute;top:278.84px;font-size:12px;line-height:12px;white-space:nowrap;color:#000;left:399px;width:400px;text-align:center;">M</div>
<div style="position:absolute;left:607px;top:260px;width:1px;height:32px;background:#c4c4c4;"></div>
<div style="position:absolute;top:278.84px;font-size:12px;line-height:12px;white-space:nowrap;color:#000;left:416px;width:400px;text-align:center;">T</div>
<div style="position:absolute;left:624px;top:260px;width:1px;height:32px;background:#c4c4c4;"></div>
<div style="position:absolute;top:278.84px;font-size:12px;line-height:12px;white-space:nowrap;color:#000;left:433px;width:400px;text-align:center;">W</div>
<div style="position:absolute;left:641px;top:260px;width:1px;height:32px;background:#c4c4c4;"></div>
<div style="position:absolute;top:278.84px;font-size:12px;line-height:12px;white-space:nowrap;color:#000;left:450px;width:400px;text-align:center;">T</div>
<div style="position:absolute;left:658px;top:260px;width:1px;height:32px;background:#c4c4c4;"></div>
<div style="position:absolute;top:278.84px;font-size:12px;line-height:12px;white-space:nowrap;color:#000;left:467px;width:400px;text-align:center;">F</div>
<div style="position:absolute;left:675px;top:260px;width:1px;height:32px;background:#c4c4c4;"></div>
<div style="position:absolute;top:278.84px;font-size:12px;line-height:12px;white-space:nowrap;color:#000;left:484px;width:400px;text-align:center;">S</div>
<div style="position:absolute;left:692px;top:260px;width:1px;height:32px;background:#c4c4c4;"></div>
<div style="position:absolute;top:278.84px;font-size:12px;line-height:12px;white-space:nowrap;color:#000;left:501px;width:400px;text-align:center;">S</div>
<div style="position:absolute;top:278.84px;font-size:12px;line-height:12px;white-space:nowrap;color:#000;left:518px;width:400px;text-align:center;">M</div>
<div style="position:absolute;left:726px;top:260px;width:1px;height:32px;background:#c4c4c4;"></div>
<div style="position:absolute;top:278.84px;font-size:12px;line-height:12px;white-space:nowrap;color:#000;left:535px;width:400px;text-align:center;">T</div>
<div style="position:absolute;left:743px;top:260px;width:1px;height:32px;background:#c4c4c4;"></div>
<div style="position:absolute;top:278.84px;font-size:12px;line-height:12px;white-space:nowrap;color:#000;left:552px;width:400px;text-align:center;">W</div>
<div style="position:absolute;left:760px;top:260px;width:1px;height:32px;background:#c4c4c4;"></div>
<div style="position:absolute;top:278.84px;font-size:12px;line-height:12px;white-space:nowrap;color:#000;left:569px;width:400px;text-align:center;">T</div>
<div style="position:absolute;left:777px;top:260px;width:1px;height:32px;background:#c4c4c4;"></div>
<div style="position:absolute;top:278.84px;font-size:12px;line-height:12px;white-space:nowrap;color:#000;left:586px;width:400px;text-align:center;">F</div>
<div style="position:absolute;left:794px;top:260px;width:1px;height:32px;background:#c4c4c4;"></div>
<div style="position:absolute;top:278.84px;font-size:12px;line-height:12px;white-space:nowrap;color:#000;left:603px;width:400px;text-align:center;">S</div>
<div style="position:absolute;left:811px;top:260px;width:1px;height:32px;background:#c4c4c4;"></div>
<div style="position:absolute;top:278.84px;font-size:12px;line-height:12px;white-space:nowrap;color:#000;left:620px;width:400px;text-align:center;">S</div>
<div style="position:absolute;top:278.84px;font-size:12px;line-height:12px;white-space:nowrap;color:#000;left:637px;width:400px;text-align:center;">M</div>
<div style="position:absolute;left:845px;top:260px;width:1px;height:32px;background:#c4c4c4;"></div>
<div style="position:absolute;top:278.84px;font-size:12px;line-height:12px;white-space:nowrap;color:#000;left:654px;width:400px;text-align:center;">T</div>
<div style="position:absolute;left:862px;top:260px;width:1px;height:32px;background:#c4c4c4;"></div>
<div style="position:absolute;top:278.84px;font-size:12px;line-height:12px;white-space:nowrap;color:#000;left:671px;width:400px;text-align:center;">W</div>
<div style="position:absolute;left:879px;top:260px;width:1px;height:32px;background:#c4c4c4;"></div>
<div style="position:absolute;top:278.84px;font-size:12px;line-height:12px;white-space:nowrap;color:#000;left:688px;width:400px;text-align:center;">T</div>
<div style="position:absolute;left:896px;top:260px;width:1px;height:32px;background:#c4c4c4;"></div>
<div style="position:absolute;top:278.84px;font-size:12px;line-height:12px;white-space:nowrap;color:#000;left:705px;width:400px;text-align:center;">F</div>
<div style="position:absolute;left:913px;top:260px;width:1px;height:32px;background:#c4c4c4;"></div>
<div style="position:absolute;top:278.84px;font-size:12px;line-height:12px;white-space:nowrap;color:#000;left:722px;width:400px;text-align:center;">S</div>
<div style="position:absolute;left:930px;top:260px;width:1px;height:32px;background:#c4c4c4;"></div>
<div style="position:absolute;top:278.84px;font-size:12px;line-height:12px;white-space:nowrap;color:#000;left:739px;width:400px;text-align:center;">S</div>
<div style="position:absolute;top:278.84px;font-size:12px;line-height:12px;white-space:nowrap;color:#000;left:756px;width:400px;text-align:center;">M</div>
<div style="position:absolute;left:964px;top:260px;width:1px;height:32px;background:#c4c4c4;"></div>
<div style="position:absolute;top:278.84px;font-size:12px;line-height:12px;white-space:nowrap;color:#000;left:773px;width:400px;text-align:center;">T</div>
<div style="position:absolute;left:981px;top:260px;width:1px;height:32px;background:#c4c4c4;"></div>
<div style="position:absolute;top:278.84px;font-size:12px;line-height:12px;white-space:nowrap;color:#000;left:790px;width:400px;text-align:center;">W</div>
<div style="position:absolute;left:998px;top:260px;width:1px;height:32px;background:#c4c4c4;"></div>
<div style="position:absolute;top:278.84px;font-size:12px;line-height:12px;white-space:nowrap;color:#000;left:807px;width:400px;text-align:center;">T</div>
<div style="position:absolute;left:1015px;top:260px;width:1px;height:32px;background:#c4c4c4;"></div>
<div style="position:absolute;top:278.84px;font-size:12px;line-height:12px;white-space:nowrap;color:#000;left:824px;width:400px;text-align:center;">F</div>
<div style="position:absolute;left:1032px;top:260px;width:1px;height:32px;background:#c4c4c4;"></div>
<div style="position:absolute;top:278.84px;font-size:12px;line-height:12px;white-space:nowrap;color:#000;left:841px;width:400px;text-align:center;">S</div>
<div style="position:absolute;left:1049px;top:260px;width:1px;height:32px;background:#c4c4c4;"></div>
<div style="position:absolute;top:278.84px;font-size:12px;line-height:12px;white-space:nowrap;color:#000;left:858px;width:400px;text-align:center;">S</div>
<div style="position:absolute;top:278.84px;font-size:12px;line-height:12px;white-space:nowrap;color:#000;left:875px;width:400px;text-align:center;">M</div>
<div style="position:absolute;top:298.00px;font-size:13px;line-height:13px;white-space:nowrap;color:#000;font-weight:bold;letter-spacing:-0.4px;left:38.8px;">1</div>
<div style="position:absolute;top:298.00px;font-size:13px;line-height:13px;white-space:nowrap;color:#000;font-weight:bold;letter-spacing:-0.7px;left:86.5px;">[Task Category]</div>
<div style="position:absolute;top:298.00px;font-size:13px;line-height:13px;white-space:nowrap;color:#000;letter-spacing:-0.4px;left:199.5px;">[Name]</div>
<div style="position:absolute;top:318.00px;font-size:13px;line-height:13px;white-space:nowrap;color:#000;letter-spacing:-0.4px;left:38.8px;">1.1</div>
<div style="position:absolute;top:318.00px;font-size:13px;line-height:13px;white-space:nowrap;color:#000;letter-spacing:-0.4px;left:86.5px;">[Task]</div>
<div style="position:absolute;top:318.00px;font-size:13px;line-height:13px;white-space:nowrap;color:#000;letter-spacing:-0.4px;left:199.5px;">[Name]</div>
<div style="position:absolute;top:338.00px;font-size:13px;line-height:13px;white-space:nowrap;color:#000;letter-spacing:-0.4px;left:38.8px;">1.2</div>
<div style="position:absolute;top:338.00px;font-size:13px;line-height:13px;white-space:nowrap;color:#000;letter-spacing:-0.4px;left:86.5px;">[Task]</div>
<div style="position:absolute;top:358.00px;font-size:13px;line-height:13px;white-space:nowrap;color:#000;letter-spacing:-0.4px;left:38.8px;">1.3</div>
<div style="position:absolute;top:358.00px;font-size:13px;line-height:13px;white-space:nowrap;color:#000;letter-spacing:-0.4px;left:86.5px;">[Task]</div>
<div style="position:absolute;top:378.00px;font-size:13px;line-height:13px;white-space:nowrap;color:#000;letter-spacing:-0.4px;left:38.8px;">1.4</div>
<div style="position:absolute;top:378.00px;font-size:13px;line-height:13px;white-space:nowrap;color:#000;letter-spacing:-0.4px;left:86.5px;">[Task]</div>
<div style="position:absolute;top:398.00px;font-size:13px;line-height:13px;white-space:nowrap;color:#000;letter-spacing:-0.4px;left:38.8px;">1.5</div>
<div style="position:absolute;top:398.00px;font-size:13px;line-height:13px;white-space:nowrap;color:#000;letter-spacing:-0.4px;left:86.5px;">[Task]</div>
<div style="position:absolute;top:418.00px;font-size:13px;line-height:13px;white-space:nowrap;color:#000;letter-spacing:-0.4px;left:38.8px;">1.5.1</div>
<div style="position:absolute;top:418.00px;font-size:13px;line-height:13px;white-space:nowrap;color:#000;letter-spacing:-0.4px;left:95.3px;">[Sub Task]</div>
<div style="position:absolute;top:438.00px;font-size:13px;line-height:13px;white-space:nowrap;color:#000;letter-spacing:-0.4px;left:38.8px;">1.5.2</div>
<div style="position:absolute;top:438.00px;font-size:13px;line-height:13px;white-space:nowrap;color:#000;letter-spacing:-0.4px;left:95.3px;">[Sub Task]</div>
<div style="position:absolute;top:458.00px;font-size:13px;line-height:13px;white-space:nowrap;color:#000;letter-spacing:-0.4px;left:38.8px;">1.5.3</div>
<div style="position:absolute;top:458.00px;font-size:13px;line-height:13px;white-space:nowrap;color:#000;letter-spacing:-0.4px;left:95.3px;">[Sub Task]</div>
<div style="position:absolute;top:476.84px;font-size:12px;line-height:12px;white-space:nowrap;color:#000;letter-spacing:-0.3px;left:38.8px;">1.6</div>
<div style="position:absolute;top:476.84px;font-size:12px;line-height:12px;white-space:nowrap;color:#222;font-style:italic;letter-spacing:0px;transform:scaleX(0.9684);transform-origin:left 0;left:85.5px;">[Insert Rows above this one, then Hide or Delete this row]</div>
<div style="position:absolute;top:496.00px;font-size:13px;line-height:13px;white-space:nowrap;color:#000;font-weight:bold;letter-spacing:-0.4px;left:38.8px;">2</div>
<div style="position:absolute;top:496.00px;font-size:13px;line-height:13px;white-space:nowrap;color:#000;font-weight:bold;letter-spacing:-0.7px;left:86.5px;">[Task Category]</div>
<div style="position:absolute;top:516.00px;font-size:13px;line-height:13px;white-space:nowrap;color:#000;letter-spacing:-0.4px;left:38.8px;">2.1</div>
<div style="position:absolute;top:516.00px;font-size:13px;line-height:13px;white-space:nowrap;color:#000;letter-spacing:-0.4px;left:86.5px;">[Task]</div>
<div style="position:absolute;top:536.00px;font-size:13px;line-height:13px;white-space:nowrap;color:#000;letter-spacing:-0.4px;left:38.8px;">2.2</div>
<div style="position:absolute;top:536.00px;font-size:13px;line-height:13px;white-space:nowrap;color:#000;letter-spacing:-0.4px;left:86.5px;">[Task]</div>
<div style="position:absolute;top:556.00px;font-size:13px;line-height:13px;white-space:nowrap;color:#000;letter-spacing:-0.4px;left:38.8px;">2.3</div>
<div style="position:absolute;top:556.00px;font-size:13px;line-height:13px;white-space:nowrap;color:#000;letter-spacing:-0.4px;left:86.5px;">[Task]</div>
<div style="position:absolute;top:576.00px;font-size:13px;line-height:13px;white-space:nowrap;color:#000;letter-spacing:-0.4px;left:38.8px;">2.4</div>
<div style="position:absolute;top:576.00px;font-size:13px;line-height:13px;white-space:nowrap;color:#000;letter-spacing:-0.4px;left:86.5px;">[Task]</div>
<div style="position:absolute;top:596.00px;font-size:13px;line-height:13px;white-space:nowrap;color:#000;letter-spacing:-0.4px;left:38.8px;">2.5</div>
<div style="position:absolute;top:596.00px;font-size:13px;line-height:13px;white-space:nowrap;color:#000;letter-spacing:-0.4px;left:86.5px;">[Task]</div>
<div style="position:absolute;top:616.00px;font-size:13px;line-height:13px;white-space:nowrap;color:#000;letter-spacing:-0.4px;left:38.8px;">2.6</div>
<div style="position:absolute;top:616.00px;font-size:13px;line-height:13px;white-space:nowrap;color:#000;letter-spacing:-0.4px;left:86.5px;">[Task]</div>
<div style="position:absolute;top:636.00px;font-size:13px;line-height:13px;white-space:nowrap;color:#000;letter-spacing:-0.4px;left:38.8px;">2.7</div>
<div style="position:absolute;top:636.00px;font-size:13px;line-height:13px;white-space:nowrap;color:#000;letter-spacing:-0.4px;left:86.5px;">[Task]</div>
<div style="position:absolute;top:654.84px;font-size:12px;line-height:12px;white-space:nowrap;color:#000;letter-spacing:-0.3px;left:38.8px;">2.8</div>
<div style="position:absolute;top:654.84px;font-size:12px;line-height:12px;white-space:nowrap;color:#222;font-style:italic;letter-spacing:0px;transform:scaleX(0.9684);transform-origin:left 0;left:85.5px;">[Insert Rows above this one, then Hide or Delete this row]</div>
<div style="position:absolute;top:674.00px;font-size:13px;line-height:13px;white-space:nowrap;color:#000;font-weight:bold;letter-spacing:-0.4px;left:38.8px;">3</div>
<div style="position:absolute;top:674.00px;font-size:13px;line-height:13px;white-space:nowrap;color:#000;font-weight:bold;letter-spacing:-0.7px;left:86.5px;">[Task Category]</div>
<div style="position:absolute;top:694.00px;font-size:13px;line-height:13px;white-space:nowrap;color:#000;letter-spacing:-0.4px;left:38.8px;">3.1</div>
<div style="position:absolute;top:694.00px;font-size:13px;line-height:13px;white-space:nowrap;color:#000;letter-spacing:-0.4px;left:86.5px;">[Task]</div>
<div style="position:absolute;top:714.00px;font-size:13px;line-height:13px;white-space:nowrap;color:#000;letter-spacing:-0.4px;left:38.8px;">3.2</div>
<div style="position:absolute;top:714.00px;font-size:13px;line-height:13px;white-space:nowrap;color:#000;letter-spacing:-0.4px;left:86.5px;">[Task]</div>
<div style="position:absolute;top:734.00px;font-size:13px;line-height:13px;white-space:nowrap;color:#000;letter-spacing:-0.4px;left:38.8px;">3.3</div>
<div style="position:absolute;top:734.00px;font-size:13px;line-height:13px;white-space:nowrap;color:#000;letter-spacing:-0.4px;left:86.5px;">[Task]</div>
<div style="position:absolute;top:754.00px;font-size:13px;line-height:13px;white-space:nowrap;color:#000;letter-spacing:-0.4px;left:38.8px;">3.4</div>
<div style="position:absolute;top:754.00px;font-size:13px;line-height:13px;white-space:nowrap;color:#000;letter-spacing:-0.4px;left:86.5px;">[Task]</div>
<div style="position:absolute;left:520px;top:314px;width:36px;height:16px;background:#808080;"></div>
<div style="position:absolute;top:318.00px;font-size:13px;line-height:13px;white-space:nowrap;color:#000;letter-spacing:-0.9px;left:-39.5px;width:400px;text-align:right;word-spacing:1.5px;">Tue 1/06/15</div>
<div style="position:absolute;top:318.00px;font-size:13px;line-height:13px;white-space:nowrap;color:#000;letter-spacing:-0.9px;left:37.5px;width:400px;text-align:right;word-spacing:1.5px;">Wed 1/14/15</div>
<div style="position:absolute;top:318.00px;font-size:13px;line-height:13px;white-space:nowrap;color:#000;letter-spacing:-0.4px;left:260px;width:400px;text-align:center;">7</div>
<div style="position:absolute;top:318.00px;font-size:13px;line-height:13px;white-space:nowrap;color:#000;letter-spacing:-0.4px;left:299px;width:400px;text-align:center;">9</div>
<div style="position:absolute;top:318.00px;font-size:13px;line-height:13px;white-space:nowrap;color:#000;letter-spacing:-0.4px;left:338px;width:400px;text-align:center;">100%</div>
<div style="position:absolute;top:318.00px;font-size:13px;line-height:13px;white-space:nowrap;color:#000;letter-spacing:-0.4px;left:374px;width:400px;text-align:center;">b</div>
<div style="position:absolute;left:520px;top:334px;width:19px;height:16px;background:#808080;"></div>
<div style="position:absolute;top:338.00px;font-size:13px;line-height:13px;white-space:nowrap;color:#000;letter-spacing:-0.9px;left:-39.5px;width:400px;text-align:right;word-spacing:1.5px;">Wed 1/07/15</div>
<div style="position:absolute;top:338.00px;font-size:13px;line-height:13px;white-space:nowrap;color:#000;letter-spacing:-0.9px;left:37.5px;width:400px;text-align:right;word-spacing:1.5px;">Thu 1/15/15</div>
<div style="position:absolute;top:338.00px;font-size:13px;line-height:13px;white-space:nowrap;color:#000;letter-spacing:-0.4px;left:260px;width:400px;text-align:center;">7</div>
<div style="position:absolute;top:338.00px;font-size:13px;line-height:13px;white-space:nowrap;color:#000;letter-spacing:-0.4px;left:299px;width:400px;text-align:center;">9</div>
<div style="position:absolute;top:338.00px;font-size:13px;line-height:13px;white-space:nowrap;color:#000;letter-spacing:-0.4px;left:338px;width:400px;text-align:center;">50%</div>
<div style="position:absolute;top:338.00px;font-size:13px;line-height:13px;white-space:nowrap;color:#000;letter-spacing:-0.4px;left:374px;width:400px;text-align:center;">k</div>
<div style="position:absolute;left:520px;top:354px;width:28px;height:16px;background:#808080;"></div>
<div style="position:absolute;top:358.00px;font-size:13px;line-height:13px;white-space:nowrap;color:#000;letter-spacing:-0.9px;left:-39.5px;width:400px;text-align:right;word-spacing:1.5px;">Fri 1/09/15</div>
<div style="position:absolute;top:358.00px;font-size:13px;line-height:13px;white-space:nowrap;color:#000;letter-spacing:-0.9px;left:37.5px;width:400px;text-align:right;word-spacing:1.5px;">Tue 1/20/15</div>
<div style="position:absolute;top:358.00px;font-size:13px;line-height:13px;white-space:nowrap;color:#000;letter-spacing:-0.4px;left:260px;width:400px;text-align:center;">7</div>
<div style="position:absolute;top:358.00px;font-size:13px;line-height:13px;white-space:nowrap;color:#000;letter-spacing:-0.4px;left:299px;width:400px;text-align:center;">12</div>
<div style="position:absolute;top:358.00px;font-size:13px;line-height:13px;white-space:nowrap;color:#000;letter-spacing:-0.4px;left:338px;width:400px;text-align:center;">75%</div>
<div style="position:absolute;top:358.00px;font-size:13px;line-height:13px;white-space:nowrap;color:#000;letter-spacing:-0.4px;left:374px;width:400px;text-align:center;">x</div>
<div style="position:absolute;left:520px;top:374px;width:19px;height:16px;background:#808080;"></div>
<div style="position:absolute;top:378.00px;font-size:13px;line-height:13px;white-space:nowrap;color:#000;letter-spacing:-0.9px;left:-39.5px;width:400px;text-align:right;word-spacing:1.5px;">Thu 1/08/15</div>
<div style="position:absolute;top:378.00px;font-size:13px;line-height:13px;white-space:nowrap;color:#000;letter-spacing:-0.9px;left:37.5px;width:400px;text-align:right;word-spacing:1.5px;">Fri 1/16/15</div>
<div style="position:absolute;top:378.00px;font-size:13px;line-height:13px;white-space:nowrap;color:#000;letter-spacing:-0.4px;left:260px;width:400px;text-align:center;">7</div>
<div style="position:absolute;top:378.00px;font-size:13px;line-height:13px;white-space:nowrap;color:#000;letter-spacing:-0.4px;left:299px;width:400px;text-align:center;">9</div>
<div style="position:absolute;top:378.00px;font-size:13px;line-height:13px;white-space:nowrap;color:#000;letter-spacing:-0.4px;left:338px;width:400px;text-align:center;">50%</div>
<div style="position:absolute;top:378.00px;font-size:13px;line-height:13px;white-space:nowrap;color:#000;letter-spacing:-0.4px;left:374px;width:400px;text-align:center;">g</div>
<div style="position:absolute;left:520px;top:394px;width:19px;height:16px;background:#808080;"></div>
<div style="position:absolute;top:398.00px;font-size:13px;line-height:13px;white-space:nowrap;color:#000;letter-spacing:-0.9px;left:-39.5px;width:400px;text-align:right;word-spacing:1.5px;">Fri 1/09/15</div>
<div style="position:absolute;top:398.00px;font-size:13px;line-height:13px;white-space:nowrap;color:#000;letter-spacing:-0.9px;left:37.5px;width:400px;text-align:right;word-spacing:1.5px;">Tue 1/20/15</div>
<div style="position:absolute;top:398.00px;font-size:13px;line-height:13px;white-space:nowrap;color:#000;letter-spacing:-0.4px;left:260px;width:400px;text-align:center;">7</div>
<div style="position:absolute;top:398.00px;font-size:13px;line-height:13px;white-space:nowrap;color:#000;letter-spacing:-0.4px;left:299px;width:400px;text-align:center;">12</div>
<div style="position:absolute;top:398.00px;font-size:13px;line-height:13px;white-space:nowrap;color:#000;letter-spacing:-0.4px;left:338px;width:400px;text-align:center;">50%</div>
<div style="position:absolute;top:398.00px;font-size:13px;line-height:13px;white-space:nowrap;color:#000;letter-spacing:-0.4px;left:374px;width:400px;text-align:center;">p</div>
<div style="position:absolute;left:520px;top:414px;width:19px;height:16px;background:#808080;"></div>
<div style="position:absolute;top:418.00px;font-size:13px;line-height:13px;white-space:nowrap;color:#000;letter-spacing:-0.9px;left:-39.5px;width:400px;text-align:right;word-spacing:1.5px;">Mon 1/12/15</div>
<div style="position:absolute;top:418.00px;font-size:13px;line-height:13px;white-space:nowrap;color:#000;letter-spacing:-0.9px;left:37.5px;width:400px;text-align:right;word-spacing:1.5px;">Wed 1/21/15</div>
<div style="position:absolute;top:418.00px;font-size:13px;line-height:13px;white-space:nowrap;color:#000;letter-spacing:-0.4px;left:260px;width:400px;text-align:center;">7</div>
<div style="position:absolute;top:418.00px;font-size:13px;line-height:13px;white-space:nowrap;color:#000;letter-spacing:-0.4px;left:299px;width:400px;text-align:center;">10</div>
<div style="position:absolute;top:418.00px;font-size:13px;line-height:13px;white-space:nowrap;color:#000;letter-spacing:-0.4px;left:338px;width:400px;text-align:center;">50%</div>
<div style="position:absolute;top:418.00px;font-size:13px;line-height:13px;white-space:nowrap;color:#000;letter-spacing:-0.4px;left:374px;width:400px;text-align:center;">y</div>
<div style="position:absolute;left:520px;top:434px;width:19px;height:16px;background:#808080;"></div>
<div style="position:absolute;top:438.00px;font-size:13px;line-height:13px;white-space:nowrap;color:#000;letter-spacing:-0.9px;left:-39.5px;width:400px;text-align:right;word-spacing:1.5px;">Mon 1/12/15</div>
<div style="position:absolute;top:438.00px;font-size:13px;line-height:13px;white-space:nowrap;color:#000;letter-spacing:-0.9px;left:37.5px;width:400px;text-align:right;word-spacing:1.5px;">Wed 1/21/15</div>
<div style="position:absolute;top:438.00px;font-size:13px;line-height:13px;white-space:nowrap;color:#000;letter-spacing:-0.4px;left:260px;width:400px;text-align:center;">7</div>
<div style="position:absolute;top:438.00px;font-size:13px;line-height:13px;white-space:nowrap;color:#000;letter-spacing:-0.4px;left:299px;width:400px;text-align:center;">10</div>
<div style="position:absolute;top:438.00px;font-size:13px;line-height:13px;white-space:nowrap;color:#000;letter-spacing:-0.4px;left:338px;width:400px;text-align:center;">50%</div>
<div style="position:absolute;top:438.00px;font-size:13px;line-height:13px;white-space:nowrap;color:#000;letter-spacing:-0.4px;left:374px;width:400px;text-align:center;">o</div>
<div style="position:absolute;left:520px;top:454px;width:19px;height:16px;background:#808080;"></div>
<div style="position:absolute;top:458.00px;font-size:13px;line-height:13px;white-space:nowrap;color:#000;letter-spacing:-0.9px;left:-39.5px;width:400px;text-align:right;word-spacing:1.5px;">Mon 1/12/15</div>
<div style="position:absolute;top:458.00px;font-size:13px;line-height:13px;white-space:nowrap;color:#000;letter-spacing:-0.9px;left:37.5px;width:400px;text-align:right;word-spacing:1.5px;">Wed 1/21/15</div>
<div style="position:absolute;top:458.00px;font-size:13px;line-height:13px;white-space:nowrap;color:#000;letter-spacing:-0.4px;left:260px;width:400px;text-align:center;">7</div>
<div style="position:absolute;top:458.00px;font-size:13px;line-height:13px;white-space:nowrap;color:#000;letter-spacing:-0.4px;left:299px;width:400px;text-align:center;">10</div>
<div style="position:absolute;top:458.00px;font-size:13px;line-height:13px;white-space:nowrap;color:#000;letter-spacing:-0.4px;left:338px;width:400px;text-align:center;">50%</div>
<div style="position:absolute;top:458.00px;font-size:13px;line-height:13px;white-space:nowrap;color:#000;letter-spacing:-0.4px;left:374px;width:400px;text-align:center;">r</div>
<div style="position:absolute;top:516.00px;font-size:13px;line-height:13px;white-space:nowrap;color:#000;letter-spacing:-0.9px;left:-39.5px;width:400px;text-align:right;word-spacing:1.5px;">Tue 1/06/15</div>
<div style="position:absolute;top:516.00px;font-size:13px;line-height:13px;white-space:nowrap;color:#000;letter-spacing:-0.9px;left:37.5px;width:400px;text-align:right;word-spacing:1.5px;">Wed 1/14/15</div>
<div style="position:absolute;top:516.00px;font-size:13px;line-height:13px;white-space:nowrap;color:#000;letter-spacing:-0.4px;left:260px;width:400px;text-align:center;">7</div>
<div style="position:absolute;top:516.00px;font-size:13px;line-height:13px;white-space:nowrap;color:#000;letter-spacing:-0.4px;left:299px;width:400px;text-align:center;">9</div>
<div style="position:absolute;top:516.00px;font-size:13px;line-height:13px;white-space:nowrap;color:#000;letter-spacing:-0.4px;left:338px;width:400px;text-align:center;">0%</div>
<div style="position:absolute;top:516.00px;font-size:13px;line-height:13px;white-space:nowrap;color:#000;letter-spacing:-0.4px;left:374px;width:400px;text-align:center;">1</div>
<div style="position:absolute;top:536.00px;font-size:13px;line-height:13px;white-space:nowrap;color:#000;letter-spacing:-0.9px;left:-39.5px;width:400px;text-align:right;word-spacing:1.5px;">Wed 1/07/15</div>
<div style="position:absolute;top:536.00px;font-size:13px;line-height:13px;white-space:nowrap;color:#000;letter-spacing:-0.9px;left:37.5px;width:400px;text-align:right;word-spacing:1.5px;">Thu 1/15/15</div>
<div style="position:absolute;top:536.00px;font-size:13px;line-height:13px;white-space:nowrap;color:#000;letter-spacing:-0.4px;left:260px;width:400px;text-align:center;">7</div>
<div style="position:absolute;top:536.00px;font-size:13px;line-height:13px;white-space:nowrap;color:#000;letter-spacing:-0.4px;left:299px;width:400px;text-align:center;">9</div>
<div style="position:absolute;top:536.00px;font-size:13px;line-height:13px;white-space:nowrap;color:#000;letter-spacing:-0.4px;left:338px;width:400px;text-align:center;">0%</div>
<div style="position:absolute;top:536.00px;font-size:13px;line-height:13px;white-space:nowrap;color:#000;letter-spacing:-0.4px;left:374px;width:400px;text-align:center;">2</div>
<div style="position:absolute;top:556.00px;font-size:13px;line-height:13px;white-space:nowrap;color:#000;letter-spacing:-0.9px;left:-39.5px;width:400px;text-align:right;word-spacing:1.5px;">Thu 1/08/15</div>
<div style="position:absolute;top:556.00px;font-size:13px;line-height:13px;white-space:nowrap;color:#000;letter-spacing:-0.9px;left:37.5px;width:400px;text-align:right;word-spacing:1.5px;">Fri 1/16/15</div>
<div style="position:absolute;top:556.00px;font-size:13px;line-height:13px;white-space:nowrap;color:#000;letter-spacing:-0.4px;left:260px;width:400px;text-align:center;">7</div>
<div style="position:absolute;top:556.00px;font-size:13px;line-height:13px;white-space:nowrap;color:#000;letter-spacing:-0.4px;left:299px;width:400px;text-align:center;">9</div>
<div style="position:absolute;top:556.00px;font-size:13px;line-height:13px;white-space:nowrap;color:#000;letter-spacing:-0.4px;left:338px;width:400px;text-align:center;">0%</div>
<div style="position:absolute;top:556.00px;font-size:13px;line-height:13px;white-space:nowrap;color:#000;letter-spacing:-0.4px;left:374px;width:400px;text-align:center;">3</div>
<div style="position:absolute;top:576.00px;font-size:13px;line-height:13px;white-space:nowrap;color:#000;letter-spacing:-0.9px;left:-39.5px;width:400px;text-align:right;word-spacing:1.5px;">Fri 1/09/15</div>
<div style="position:absolute;top:576.00px;font-size:13px;line-height:13px;white-space:nowrap;color:#000;letter-spacing:-0.9px;left:37.5px;width:400px;text-align:right;word-spacing:1.5px;">Tue 1/20/15</div>
<div style="position:absolute;top:576.00px;font-size:13px;line-height:13px;white-space:nowrap;color:#000;letter-spacing:-0.4px;left:260px;width:400px;text-align:center;">7</div>
<div style="position:absolute;top:576.00px;font-size:13px;line-height:13px;white-space:nowrap;color:#000;letter-spacing:-0.4px;left:299px;width:400px;text-align:center;">12</div>
<div style="position:absolute;top:576.00px;font-size:13px;line-height:13px;white-space:nowrap;color:#000;letter-spacing:-0.4px;left:338px;width:400px;text-align:center;">0%</div>
<div style="position:absolute;top:576.00px;font-size:13px;line-height:13px;white-space:nowrap;color:#000;letter-spacing:-0.4px;left:374px;width:400px;text-align:center;">4</div>
<div style="position:absolute;top:596.00px;font-size:13px;line-height:13px;white-space:nowrap;color:#000;letter-spacing:-0.9px;left:-39.5px;width:400px;text-align:right;word-spacing:1.5px;">Mon 1/12/15</div>
<div style="position:absolute;top:596.00px;font-size:13px;line-height:13px;white-space:nowrap;color:#000;letter-spacing:-0.9px;left:37.5px;width:400px;text-align:right;word-spacing:1.5px;">Wed 1/21/15</div>
<div style="position:absolute;top:596.00px;font-size:13px;line-height:13px;white-space:nowrap;color:#000;letter-spacing:-0.4px;left:260px;width:400px;text-align:center;">7</div>
<div style="position:absolute;top:596.00px;font-size:13px;line-height:13px;white-space:nowrap;color:#000;letter-spacing:-0.4px;left:299px;width:400px;text-align:center;">10</div>
<div style="position:absolute;top:596.00px;font-size:13px;line-height:13px;white-space:nowrap;color:#000;letter-spacing:-0.4px;left:338px;width:400px;text-align:center;">0%</div>
<div style="position:absolute;top:596.00px;font-size:13px;line-height:13px;white-space:nowrap;color:#000;letter-spacing:-0.4px;left:374px;width:400px;text-align:center;">5</div>
<div style="position:absolute;top:616.00px;font-size:13px;line-height:13px;white-space:nowrap;color:#000;letter-spacing:-0.9px;left:-39.5px;width:400px;text-align:right;word-spacing:1.5px;">Tue 1/13/15</div>
<div style="position:absolute;top:616.00px;font-size:13px;line-height:13px;white-space:nowrap;color:#000;letter-spacing:-0.9px;left:37.5px;width:400px;text-align:right;word-spacing:1.5px;">Thu 1/22/15</div>
<div style="position:absolute;top:616.00px;font-size:13px;line-height:13px;white-space:nowrap;color:#000;letter-spacing:-0.4px;left:260px;width:400px;text-align:center;">7</div>
<div style="position:absolute;top:616.00px;font-size:13px;line-height:13px;white-space:nowrap;color:#000;letter-spacing:-0.4px;left:299px;width:400px;text-align:center;">10</div>
<div style="position:absolute;top:616.00px;font-size:13px;line-height:13px;white-space:nowrap;color:#000;letter-spacing:-0.4px;left:338px;width:400px;text-align:center;">0%</div>
<div style="position:absolute;top:616.00px;font-size:13px;line-height:13px;white-space:nowrap;color:#000;letter-spacing:-0.4px;left:374px;width:400px;text-align:center;">6</div>
<div style="position:absolute;top:636.00px;font-size:13px;line-height:13px;white-space:nowrap;color:#000;letter-spacing:-0.9px;left:-39.5px;width:400px;text-align:right;word-spacing:1.5px;">Wed 1/14/15</div>
<div style="position:absolute;top:636.00px;font-size:13px;line-height:13px;white-space:nowrap;color:#000;letter-spacing:-0.9px;left:37.5px;width:400px;text-align:right;word-spacing:1.5px;">Fri 1/23/15</div>
<div style="position:absolute;top:636.00px;font-size:13px;line-height:13px;white-space:nowrap;color:#000;letter-spacing:-0.4px;left:260px;width:400px;text-align:center;">7</div>
<div style="position:absolute;top:636.00px;font-size:13px;line-height:13px;white-space:nowrap;color:#000;letter-spacing:-0.4px;left:299px;width:400px;text-align:center;">10</div>
<div style="position:absolute;top:636.00px;font-size:13px;line-height:13px;white-space:nowrap;color:#000;letter-spacing:-0.4px;left:338px;width:400px;text-align:center;">0%</div>
<div style="position:absolute;top:694.00px;font-size:13px;line-height:13px;white-space:nowrap;color:#000;letter-spacing:-0.9px;left:-39.5px;width:400px;text-align:right;word-spacing:1.5px;">Tue 1/06/15</div>
<div style="position:absolute;top:694.00px;font-size:13px;line-height:13px;white-space:nowrap;color:#000;letter-spacing:-0.9px;left:37.5px;width:400px;text-align:right;word-spacing:1.5px;">Thu 1/08/15</div>
<div style="position:absolute;top:694.00px;font-size:13px;line-height:13px;white-space:nowrap;color:#000;letter-spacing:-0.4px;left:260px;width:400px;text-align:center;">3</div>
<div style="position:absolute;top:694.00px;font-size:13px;line-height:13px;white-space:nowrap;color:#000;letter-spacing:-0.4px;left:299px;width:400px;text-align:center;">3</div>
<div style="position:absolute;top:694.00px;font-size:13px;line-height:13px;white-space:nowrap;color:#000;letter-spacing:-0.4px;left:338px;width:400px;text-align:center;">0%</div>
<div style="position:absolute;top:714.00px;font-size:13px;line-height:13px;white-space:nowrap;color:#000;letter-spacing:-0.9px;left:-39.5px;width:400px;text-align:right;word-spacing:1.5px;">Wed 1/07/15</div>
<div style="position:absolute;top:714.00px;font-size:13px;line-height:13px;white-space:nowrap;color:#000;letter-spacing:-0.9px;left:37.5px;width:400px;text-align:right;word-spacing:1.5px;">Tue 1/13/15</div>
<div style="position:absolute;top:714.00px;font-size:13px;line-height:13px;white-space:nowrap;color:#000;letter-spacing:-0.4px;left:260px;width:400px;text-align:center;">5</div>
<div style="position:absolute;top:714.00px;font-size:13px;line-height:13px;white-space:nowrap;color:#000;letter-spacing:-0.4px;left:299px;width:400px;text-align:center;">7</div>
<div style="position:absolute;top:714.00px;font-size:13px;line-height:13px;white-space:nowrap;color:#000;letter-spacing:-0.4px;left:338px;width:400px;text-align:center;">0%</div>
<div style="position:absolute;top:734.00px;font-size:13px;line-height:13px;white-space:nowrap;color:#000;letter-spacing:-0.9px;left:-39.5px;width:400px;text-align:right;word-spacing:1.5px;">Thu 1/08/15</div>
<div style="position:absolute;top:734.00px;font-size:13px;line-height:13px;white-space:nowrap;color:#000;letter-spacing:-0.9px;left:37.5px;width:400px;text-align:right;word-spacing:1.5px;">Fri 1/09/15</div>
<div style="position:absolute;top:734.00px;font-size:13px;line-height:13px;white-space:nowrap;color:#000;letter-spacing:-0.4px;left:260px;width:400px;text-align:center;">2</div>
<div style="position:absolute;top:734.00px;font-size:13px;line-height:13px;white-space:nowrap;color:#000;letter-spacing:-0.4px;left:299px;width:400px;text-align:center;">2</div>
<div style="position:absolute;top:734.00px;font-size:13px;line-height:13px;white-space:nowrap;color:#000;letter-spacing:-0.4px;left:338px;width:400px;text-align:center;">0%</div>
<div style="position:absolute;top:754.00px;font-size:13px;line-height:13px;white-space:nowrap;color:#000;letter-spacing:-0.9px;left:-39.5px;width:400px;text-align:right;word-spacing:1.5px;">Fri 1/09/15</div>
<div style="position:absolute;top:754.00px;font-size:13px;line-height:13px;white-space:nowrap;color:#000;letter-spacing:-0.9px;left:37.5px;width:400px;text-align:right;word-spacing:1.5px;">Fri 1/16/15</div>
<div style="position:absolute;top:754.00px;font-size:13px;line-height:13px;white-space:nowrap;color:#000;letter-spacing:-0.4px;left:260px;width:400px;text-align:center;">6</div>
<div style="position:absolute;top:754.00px;font-size:13px;line-height:13px;white-space:nowrap;color:#000;letter-spacing:-0.4px;left:299px;width:400px;text-align:center;">8</div>
<div style="position:absolute;top:754.00px;font-size:13px;line-height:13px;white-space:nowrap;color:#000;letter-spacing:-0.4px;left:338px;width:400px;text-align:center;">0%</div>
<div style="position:absolute;left:607px;top:313px;width:154px;height:19px;background:#0070c0;"></div>
<div style="position:absolute;left:624px;top:333px;width:154px;height:19px;background:#000000;"></div>
<div style="position:absolute;left:658px;top:353px;width:205px;height:19px;background:#808080;"></div>
<div style="position:absolute;left:641px;top:373px;width:154px;height:19px;background:#00b050;"></div>
<div style="position:absolute;left:658px;top:393px;width:205px;height:19px;background:#7030a0;"></div>
<div style="position:absolute;left:709px;top:413px;width:171px;height:19px;background:#ffff00;"></div>
<div style="position:absolute;left:709px;top:433px;width:171px;height:19px;background:#ffc000;"></div>
<div style="position:absolute;left:709px;top:453px;width:171px;height:19px;background:#c00000;"></div>
<div style="position:absolute;left:607px;top:511px;width:154px;height:19px;background:#95b3d7;"></div>
<div style="position:absolute;left:624px;top:531px;width:154px;height:19px;background:#da9694;"></div>
<div style="position:absolute;left:641px;top:551px;width:154px;height:19px;background:#c4d79b;"></div>
<div style="position:absolute;left:658px;top:571px;width:205px;height:19px;background:#b1a0c7;"></div>
<div style="position:absolute;left:709px;top:591px;width:171px;height:19px;background:#92cddc;"></div>
<div style="position:absolute;left:726px;top:611px;width:171px;height:19px;background:#fabf8f;"></div>
<div style="position:absolute;left:743px;top:631px;width:171px;height:19px;background:#0070c0;"></div>
<div style="position:absolute;left:607px;top:689px;width:52px;height:19px;background:#0070c0;"></div>
<div style="position:absolute;left:624px;top:709px;width:120px;height:19px;background:#0070c0;"></div>
<div style="position:absolute;left:641px;top:729px;width:35px;height:19px;background:#0070c0;"></div>
<div style="position:absolute;left:658px;top:749px;width:137px;height:19px;background:#0070c0;"></div>
<div style="position:absolute;left:34px;top:179px;width:51px;height:2px;background:#217346;"></div>
<div style="position:absolute;left:34px;top:179px;width:2px;height:23px;background:#217346;"></div>
<div style="position:absolute;left:83px;top:179px;width:2px;height:19px;background:#217346;"></div>
<div style="position:absolute;left:34px;top:200px;width:47px;height:2px;background:#217346;"></div>
<div style="position:absolute;left:82px;top:199px;width:4px;height:4px;background:#217346;"></div>
</div></div>
<div style="position:absolute;left:0px;top:763px;width:1072px;height:14px;background:#fff;"></div>
<div style="position:absolute;left:36px;top:763px;width:1036px;height:14px;background:#e6e6e6;"></div>
<div style="position:absolute;left:36px;top:763px;width:22px;height:15px;border:1px solid #c6c6c6;background:#fff;"></div>
<div style="position:absolute;left:45px;top:767px;width:0;height:0;border-top:4px solid transparent;border-bottom:4px solid transparent;border-right:4px solid #777;"></div>
<div style="position:absolute;left:57px;top:763px;width:670px;height:15px;border:1px solid #c6c6c6;background:#fff;"></div>
<div style="position:absolute;left:0px;top:778px;width:1072px;height:26px;background:#f5f5f5;"></div>
<div style="position:absolute;left:9px;top:787px;width:1px;height:8px;background:#777;"></div>
<div style="position:absolute;left:10px;top:787px;width:0;height:0;border-top:4px solid transparent;border-bottom:4px solid transparent;border-right:5px solid #777;"></div>
<div style="position:absolute;left:37px;top:787px;width:0;height:0;border-top:4px solid transparent;border-bottom:4px solid transparent;border-right:5px solid #777;"></div>
<div style="position:absolute;left:64px;top:787px;width:0;height:0;border-top:4px solid transparent;border-bottom:4px solid transparent;border-left:5px solid #777;"></div>
<div style="position:absolute;left:90px;top:787px;width:0;height:0;border-top:4px solid transparent;border-bottom:4px solid transparent;border-left:5px solid #777;"></div>
<div style="position:absolute;left:95px;top:787px;width:1px;height:8px;background:#777;"></div>
<div style="position:absolute;left:135px;top:780px;width:109px;height:21px;border-left:1px solid #a6a6a6;border-right:1px solid #a6a6a6;background:#fff;"></div>
<div style="position:absolute;left:135px;top:800px;width:109px;height:2px;background:#217346;"></div>
<div style="position:absolute;top:783.15px;font-size:14px;line-height:14px;white-space:nowrap;color:#217346;font-weight:bold;transform:scaleX(0.9097);transform-origin:center 0;left:-10.5px;width:400px;text-align:center;">GanttChart</div>
<div style="position:absolute;top:782.15px;font-size:14px;line-height:14px;white-space:nowrap;color:#444;transform:scaleX(0.9218);transform-origin:left 0;left:263.5px;">Holidays</div>
<div style="position:absolute;left:334px;top:780px;width:1px;height:21px;background:#9a9a9a;"></div>
<div style="position:absolute;top:782.15px;font-size:14px;line-height:14px;white-space:nowrap;color:#444;transform:scaleX(0.9028);transform-origin:left 0;left:354.5px;">Help</div>
<div style="position:absolute;left:402px;top:780px;width:1px;height:21px;background:#9a9a9a;"></div>
<div style="position:absolute;top:782.15px;font-size:14px;line-height:14px;white-space:nowrap;color:#444;transform:scaleX(0.9254);transform-origin:left 0;left:422px;">TermsOfUse</div>
<div style="position:absolute;left:515px;top:780px;width:1px;height:21px;background:#9a9a9a;"></div>
<div style="position:absolute;left:554px;top:783px;width:16px;height:16px;border:1px solid #7a7a7a;border-radius:50%;background:#fff;"></div>
<div style="position:absolute;left:558px;top:790px;width:8px;height:2px;background:#6e6e6e;"></div>
<div style="position:absolute;left:561px;top:787px;width:2px;height:8px;background:#6e6e6e;"></div>
</body></html>
